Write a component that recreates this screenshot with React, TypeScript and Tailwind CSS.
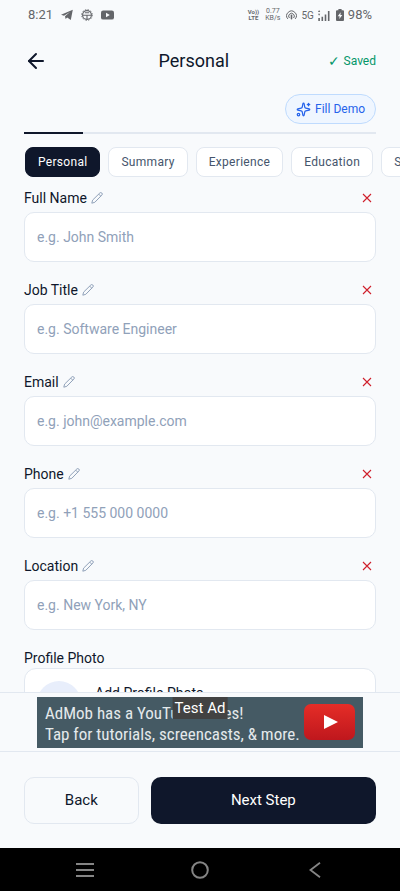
import { useState } from 'react'
import { ArrowLeft, Sparkles } from 'lucide-react'

interface Field {
  id: string
  label: string
  placeholder: string
  type: string
}

const FIELDS: Field[] = [
  { id: 'fullName', label: 'Full Name', placeholder: 'e.g. John Smith', type: 'text' },
  { id: 'jobTitle', label: 'Job Title', placeholder: 'e.g. Software Engineer', type: 'text' },
  { id: 'email', label: 'Email', placeholder: 'e.g. john@example.com', type: 'email' },
  { id: 'phone', label: 'Phone', placeholder: 'e.g. +1 555 000 0000', type: 'tel' },
  { id: 'location', label: 'Location', placeholder: 'e.g. New York, NY', type: 'text' },
]

const STEPS = ['Personal', 'Summary', 'Experience', 'Education', 'Skills', 'Projects']

function StatusBar() {
  return (
    <div className="flex h-[30px] shrink-0 items-center justify-between px-7 text-[#64666a]">
      <div className="flex items-center gap-2">
        <span className="text-[13px]">8:21</span>
        <svg width="12" height="12" viewBox="0 0 12 12" fill="currentColor">
          <path d="M0 5.8 11.8.8 9.8 11 6.2 8.4 4.6 10 4 7.2 9 3 3 6.7Z" />
        </svg>
        <svg width="12" height="12" viewBox="0 0 12 12" fill="none" stroke="currentColor">
          <circle cx="6" cy="6" r="5.3" strokeWidth="1" strokeDasharray="1.4 1.37" />
          <circle cx="6" cy="6" r="4.4" strokeWidth="1.1" />
          <path d="M1.8 6.2h8.4M6 6.2v4M3.8 3.8h4.4" strokeWidth="1.1" />
        </svg>
        <svg width="13" height="10" viewBox="0 0 13 10">
          <rect y=".4" width="13" height="9.2" rx="2.2" fill="currentColor" />
          <path d="M5 2.8v4.4L8.8 5Z" fill="#f8fafc" />
        </svg>
      </div>
      <div className="flex items-center">
        <span className="text-center text-[6px] leading-[6px] font-bold">
          Vo))
          <br />
          LTE
        </span>
        <span className="ml-1.5 text-center text-[7px] leading-[7px]">
          0.77
          <br />
          KB/s
        </span>
        <svg className="ml-1.5" width="11" height="10" viewBox="0 0 11 10" fill="none" stroke="currentColor">
          <path d="M1.8 8.9a4.8 4.8 0 1 1 7.4 0M3.4 8a2.8 2.8 0 1 1 4.2 0" strokeWidth="1" />
          <path d="M5.5 5.4v3.4" strokeWidth="1.6" strokeLinecap="round" />
        </svg>
        <span className="ml-1 text-[10px]">5G</span>
        <svg className="ml-1" width="12" height="11" viewBox="0 0 12 11" fill="currentColor">
          <path d="M0 2h2.2L1.1 0ZM0 3.8h2.2L1.1 5.8ZM.3 8h1.6v3H.3ZM3.5 6.8h1.6V11H3.5ZM6.7 4.4h1.6V11H6.7ZM9.9 1h1.6v10H9.9Z" />
        </svg>
        <svg className="ml-1.5" width="8" height="12" viewBox="0 0 8 12">
          <path d="M2.4 0h3.2v1.2H7a1 1 0 0 1 1 1V11a1 1 0 0 1-1 1H1a1 1 0 0 1-1-1V2.2a1 1 0 0 1 1-1h1.4Z" fill="currentColor" />
          <path d="M4.7 3.2 1.7 7.2h1.9L3.3 10 6.3 6H4.4Z" fill="#f8fafc" />
        </svg>
        <span className="ml-1 text-[13px]">98%</span>
      </div>
    </div>
  )
}

function PencilIcon() {
  return (
    <svg width="12" height="12" viewBox="0 0 12 12" fill="none" stroke="currentColor" strokeWidth="1" strokeLinejoin="round">
      <path d="M.8 11.2 1.6 8.1 8.8 1a1.4 1.4 0 0 1 2 0 1.4 1.4 0 0 1 0 2.1L3.8 10.3Z" />
      <path d="M7.7 2.1 9.7 4.1" />
    </svg>
  )
}

function FormField({ field }: { field: Field }) {
  return (
    <div className="mb-[18px]">
      <div className="mb-1 flex h-5 items-center justify-between">
        <div className="flex items-center gap-1">
          <label htmlFor={field.id} className="text-sm leading-5 text-slate-900">
            {field.label}
          </label>
          <button type="button" aria-label={`Rename ${field.label}`} className="text-slate-400">
            <PencilIcon />
          </button>
        </div>
        <button type="button" aria-label={`Remove ${field.label}`} className="mr-1 text-[#cf1f2b]">
          <svg width="10" height="10" viewBox="0 0 10 10" fill="none" stroke="currentColor" strokeWidth="1.1">
            <path d="M1 1l8 8M9 1 1 9" />
          </svg>
        </button>
      </div>
      <input
        id={field.id}
        type={field.type}
        placeholder={field.placeholder}
        className="h-[50px] w-full rounded-[10px] border border-slate-200 bg-white px-3 text-sm text-slate-900 outline-none placeholder:text-slate-400"
      />
    </div>
  )
}

function AdBanner() {
  return (
    <div className="flex h-[60px] shrink-0 items-center justify-center border-y border-slate-200">
      <a
        href="#ad"
        className="relative flex h-[51px] w-[326px] items-center justify-between bg-[#455a64] px-2 text-[#e4e9eb]"
      >
        <span className="pt-1 font-['Roboto_Condensed','Liberation_Sans_Narrow',sans-serif] text-[17px] leading-[21px] whitespace-nowrap">
          AdMob has a YouTube series!
          <br />
          Tap for tutorials, screencasts, &amp; more.
        </span>
        <svg className="shrink-0" width="51" height="36" viewBox="0 0 51 36">
          <defs>
            <linearGradient id="play" x1="0" y1="0" x2="0" y2="1">
              <stop offset="0" stopColor="#e52d27" />
              <stop offset="1" stopColor="#bf171d" />
            </linearGradient>
          </defs>
          <rect width="51" height="36" rx="7" fill="url(#play)" />
          <path d="M20 11v14l14-7Z" fill="#fff" />
        </svg>
        <span className="absolute top-0 left-1/2 -translate-x-1/2 bg-[#424242] px-0.5 text-[15px] leading-[22px] whitespace-nowrap text-white">
          Test Ad
        </span>
      </a>
    </div>
  )
}

export default function App() {
  const [step, setStep] = useState(0)

  return (
    <div className="flex h-screen flex-col overflow-hidden bg-slate-50 font-[Roboto,sans-serif] text-slate-900">
      <StatusBar />

      <header className="flex h-[62px] shrink-0 items-center justify-between px-6">
        <button type="button" aria-label="Go back" className="w-9">
          <ArrowLeft size={24} strokeWidth={2} />
        </button>
        <h1 className="text-lg">Personal</h1>
        <span className="flex items-center gap-1 text-xs text-[#059669]">
          <span className="text-sm">✓</span>
          Saved
        </span>
      </header>

      <div className="mt-0.5 flex shrink-0 justify-end px-6">
        <button
          type="button"
          className="flex h-[30px] items-center gap-1 rounded-full border border-[#bfdbfe] bg-[#eff6ff] px-2.5 text-xs text-[#2563eb]"
        >
          <Sparkles size={15} />
          Fill Demo
        </button>
      </div>

      <div className="mx-6 mt-2 h-0.5 shrink-0 bg-slate-200">
        <div className="h-full w-1/6 bg-slate-900" />
      </div>

      <nav className="mt-[13px] flex shrink-0 gap-2 overflow-x-auto pl-[25px] [scrollbar-width:none]">
        {STEPS.map((name, i) => (
          <button
            key={name}
            type="button"
            onClick={() => setStep(i)}
            className={`h-[30px] shrink-0 rounded-lg border px-3 text-xs tracking-wide ${
              i === step
                ? 'border-slate-900 bg-slate-900 text-white'
                : 'border-slate-200 bg-white text-slate-600'
            }`}
          >
            {name}
          </button>
        ))}
      </nav>

      <main className="min-h-0 flex-1 overflow-y-auto px-6 pt-[11px] [scrollbar-width:none]">
        {FIELDS.map((field) => (
          <FormField key={field.id} field={field} />
        ))}
        <h2 className="text-sm leading-5">Profile Photo</h2>
        <div className="flex items-start gap-3.5 rounded-xl border border-slate-200 bg-white p-3">
          <div className="size-11 rounded-full bg-[#e8eefb]" />
          <p className="mt-0.5 text-sm">Add Profile Photo</p>
        </div>
      </main>

      <AdBanner />

      <footer className="flex shrink-0 gap-3 px-6 pt-[25px] pb-6">
        <button type="button" className="h-[47px] flex-1 rounded-[10px] border border-slate-200 text-[15px]">
          Back
        </button>
        <button type="button" className="h-[47px] flex-2 rounded-[10px] bg-slate-900 text-[15px] text-white">
          Next Step
        </button>
      </footer>

      <div className="grid h-[43px] shrink-0 grid-cols-3 place-items-center bg-black px-7 text-[#858585]">
        <button type="button" aria-label="Recent apps">
          <svg width="18" height="16" viewBox="0 0 18 16" stroke="currentColor" strokeWidth="2">
            <path d="M0 2h18M0 8h18M0 14h18" />
          </svg>
        </button>
        <button type="button" aria-label="Home">
          <svg width="18" height="18" viewBox="0 0 18 18" fill="none" stroke="currentColor" strokeWidth="2">
            <circle cx="9" cy="9" r="7.8" />
          </svg>
        </button>
        <button type="button" aria-label="Back">
          <svg width="12" height="16" viewBox="0 0 12 16" fill="none" stroke="currentColor" strokeWidth="1.8">
            <path d="M11 .8 1.5 8 11 15.2" />
          </svg>
        </button>
      </div>
    </div>
  )
}
